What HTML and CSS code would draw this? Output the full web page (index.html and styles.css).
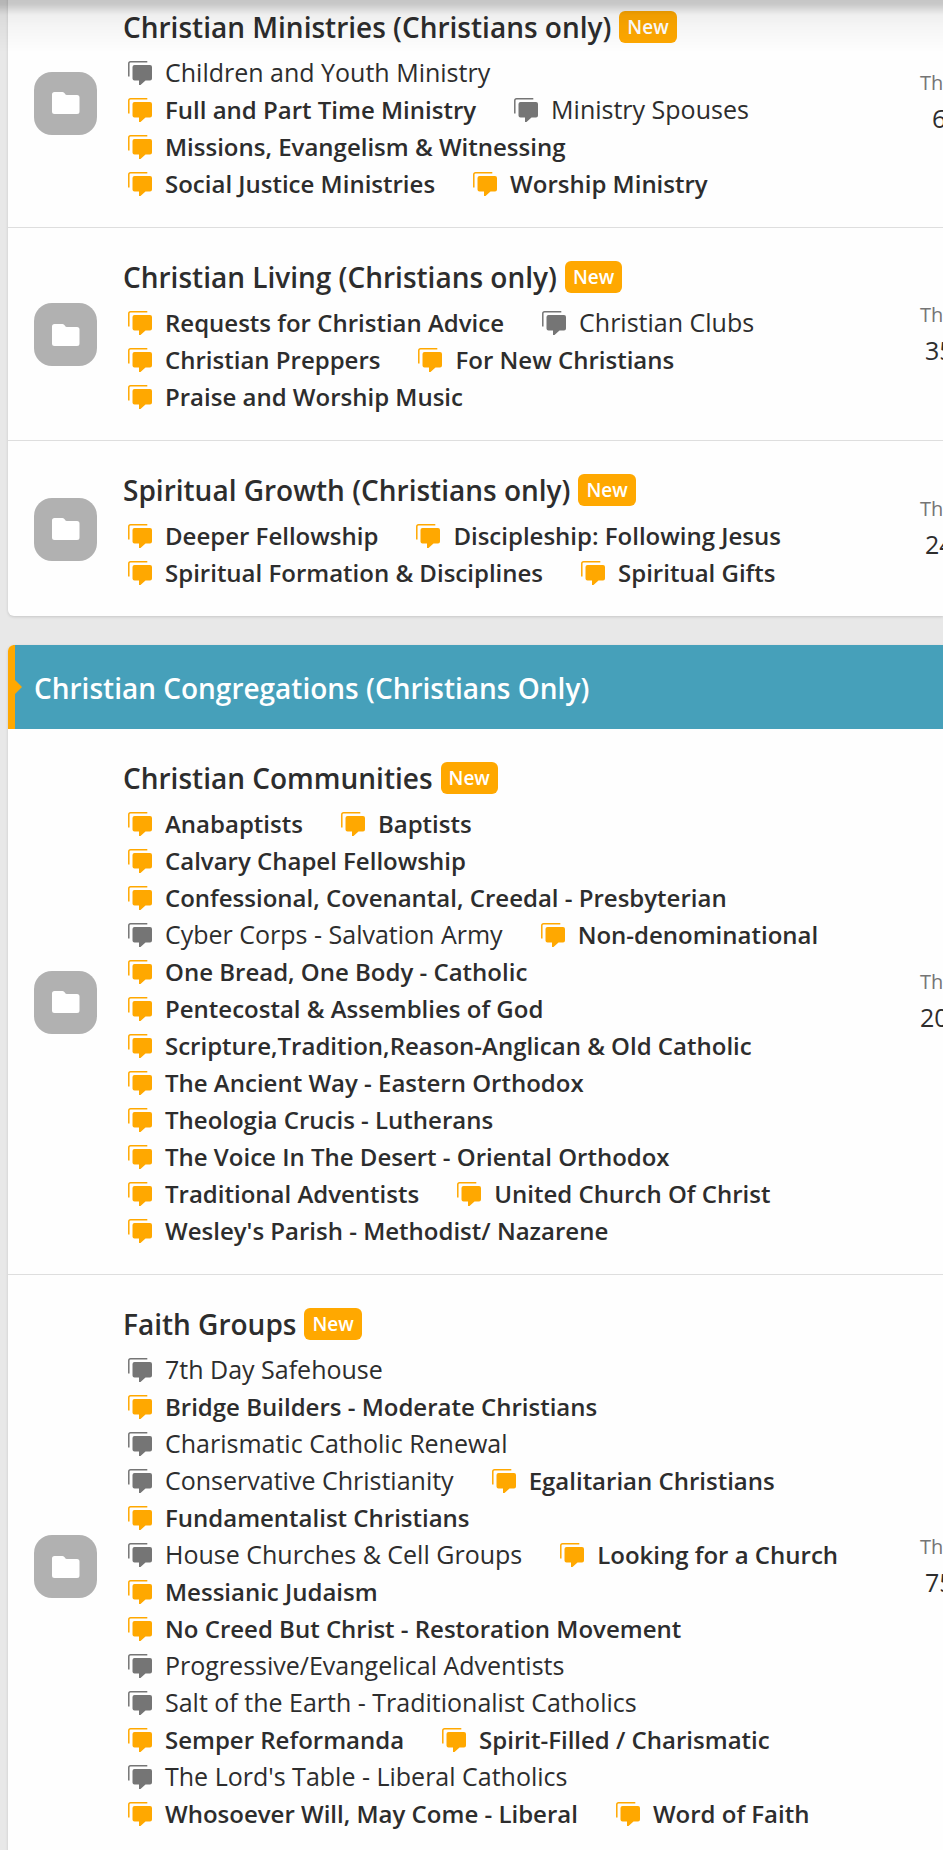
FILE: index.html
```html
<!DOCTYPE html>
<html lang="en">
<head>
<meta charset="utf-8">
<meta name="viewport" content="width=device-width, initial-scale=1">
<title>Forums</title>
<link rel="stylesheet" href="styles.css">
</head>
<body>
<svg class="defs" aria-hidden="true">
  <symbol id="chat" viewBox="0 0 24 24">
    <path d="M.8 15.5V2.6Q.8.8 2.6.8H19.300" fill="none" stroke="currentColor" stroke-width="1.500"/>
    <path d="M6.500 4H22Q24 4 24 6V17.500Q24 19.500 22 19.500H17.500L12.500 24H11V19.500H6.500Q4.500 19.500 4.500 17.500V6Q4.500 4 6.500 4Z" fill="currentColor"/>
  </symbol>
  <symbol id="folder" viewBox="0 0 28 22">
    <path d="M2.500 0H10.500Q12 0 12.800 1.500Q13.600 3 15 3H25Q27.500 3 27.500 5.500V19.500Q27.500 22 25 22H2.500Q0 22 0 19.500V2.500Q0 0 2.500 0Z" fill="currentColor"/>
  </symbol>
</svg>
<div class="top-shade"></div>
<main class="page">
  <section class="card card-first">
    <article class="node">
      <span class="node-icon"><svg><use href="#folder"/></svg></span>
      <div class="node-main">
        <h3 class="node-title"><a href="#">Christian Ministries (Christians only)</a><span class="badge">New</span></h3>
        <ul class="subs">
          <li><a href="#"><svg><use href="#chat"/></svg>Children and Youth Ministry</a></li>
          <li class="unread"><a href="#"><svg><use href="#chat"/></svg>Full and Part Time Ministry</a></li>
          <li><a href="#"><svg><use href="#chat"/></svg>Ministry Spouses</a></li>
          <li class="unread"><a href="#"><svg><use href="#chat"/></svg>Missions, Evangelism &amp; Witnessing</a></li>
          <li class="unread"><a href="#"><svg><use href="#chat"/></svg>Social Justice Ministries</a></li>
          <li class="unread"><a href="#"><svg><use href="#chat"/></svg>Worship Ministry</a></li>
        </ul>
      </div>
      <dl class="stats short"><dt>Th</dt><dd>6</dd></dl>
    </article>
    <article class="node">
      <span class="node-icon"><svg><use href="#folder"/></svg></span>
      <div class="node-main">
        <h3 class="node-title"><a href="#">Christian Living (Christians only)</a><span class="badge">New</span></h3>
        <ul class="subs">
          <li class="unread"><a href="#"><svg><use href="#chat"/></svg>Requests for Christian Advice</a></li>
          <li><a href="#"><svg><use href="#chat"/></svg>Christian Clubs</a></li>
          <li class="unread"><a href="#"><svg><use href="#chat"/></svg>Christian Preppers</a></li>
          <li class="unread"><a href="#"><svg><use href="#chat"/></svg>For New Christians</a></li>
          <li class="unread"><a href="#"><svg><use href="#chat"/></svg>Praise and Worship Music</a></li>
        </ul>
      </div>
      <dl class="stats"><dt>Th</dt><dd>35</dd></dl>
    </article>
    <article class="node">
      <span class="node-icon"><svg><use href="#folder"/></svg></span>
      <div class="node-main">
        <h3 class="node-title"><a href="#">Spiritual Growth (Christians only)</a><span class="badge">New</span></h3>
        <ul class="subs">
          <li class="unread"><a href="#"><svg><use href="#chat"/></svg>Deeper Fellowship</a></li>
          <li class="unread"><a href="#"><svg><use href="#chat"/></svg>Discipleship: Following Jesus</a></li>
          <li class="unread"><a href="#"><svg><use href="#chat"/></svg>Spiritual Formation &amp; Disciplines</a></li>
          <li class="unread"><a href="#"><svg><use href="#chat"/></svg>Spiritual Gifts</a></li>
        </ul>
      </div>
      <dl class="stats"><dt>Th</dt><dd>24</dd></dl>
    </article>
  </section>

  <section class="card">
    <h2 class="card-header"><a href="#">Christian Congregations (Christians Only)</a></h2>
    <article class="node">
      <span class="node-icon"><svg><use href="#folder"/></svg></span>
      <div class="node-main">
        <h3 class="node-title"><a href="#">Christian Communities</a><span class="badge">New</span></h3>
        <ul class="subs">
          <li class="unread"><a href="#"><svg><use href="#chat"/></svg>Anabaptists</a></li>
          <li class="unread"><a href="#"><svg><use href="#chat"/></svg>Baptists</a></li>
          <li class="unread"><a href="#"><svg><use href="#chat"/></svg>Calvary Chapel Fellowship</a></li>
          <li class="unread"><a href="#"><svg><use href="#chat"/></svg>Confessional, Covenantal, Creedal - Presbyterian</a></li>
          <li><a href="#"><svg><use href="#chat"/></svg>Cyber Corps - Salvation Army</a></li>
          <li class="unread"><a href="#"><svg><use href="#chat"/></svg>Non-denominational</a></li>
          <li class="unread"><a href="#"><svg><use href="#chat"/></svg>One Bread, One Body - Catholic</a></li>
          <li class="unread"><a href="#"><svg><use href="#chat"/></svg>Pentecostal &amp; Assemblies of God</a></li>
          <li class="unread"><a href="#"><svg><use href="#chat"/></svg>Scripture,Tradition,Reason-Anglican &amp; Old Catholic</a></li>
          <li class="unread"><a href="#"><svg><use href="#chat"/></svg>The Ancient Way - Eastern Orthodox</a></li>
          <li class="unread"><a href="#"><svg><use href="#chat"/></svg>Theologia Crucis - Lutherans</a></li>
          <li class="unread"><a href="#"><svg><use href="#chat"/></svg>The Voice In The Desert - Oriental Orthodox</a></li>
          <li class="unread"><a href="#"><svg><use href="#chat"/></svg>Traditional Adventists</a></li>
          <li class="unread"><a href="#"><svg><use href="#chat"/></svg>United Church Of Christ</a></li>
          <li class="unread"><a href="#"><svg><use href="#chat"/></svg>Wesley's Parish - Methodist/ Nazarene</a></li>
        </ul>
      </div>
      <dl class="stats long"><dt>Th</dt><dd>20</dd></dl>
    </article>
    <article class="node">
      <span class="node-icon"><svg><use href="#folder"/></svg></span>
      <div class="node-main">
        <h3 class="node-title"><a href="#">Faith Groups</a><span class="badge">New</span></h3>
        <ul class="subs">
          <li><a href="#"><svg><use href="#chat"/></svg>7th Day Safehouse</a></li>
          <li class="unread"><a href="#"><svg><use href="#chat"/></svg>Bridge Builders - Moderate Christians</a></li>
          <li><a href="#"><svg><use href="#chat"/></svg>Charismatic Catholic Renewal</a></li>
          <li><a href="#"><svg><use href="#chat"/></svg>Conservative Christianity</a></li>
          <li class="unread"><a href="#"><svg><use href="#chat"/></svg>Egalitarian Christians</a></li>
          <li class="unread"><a href="#"><svg><use href="#chat"/></svg>Fundamentalist Christians</a></li>
          <li><a href="#"><svg><use href="#chat"/></svg>House Churches &amp; Cell Groups</a></li>
          <li class="unread"><a href="#"><svg><use href="#chat"/></svg>Looking for a Church</a></li>
          <li class="unread"><a href="#"><svg><use href="#chat"/></svg>Messianic Judaism</a></li>
          <li class="unread"><a href="#"><svg><use href="#chat"/></svg>No Creed But Christ - Restoration Movement</a></li>
          <li><a href="#"><svg><use href="#chat"/></svg>Progressive/Evangelical Adventists</a></li>
          <li><a href="#"><svg><use href="#chat"/></svg>Salt of the Earth - Traditionalist Catholics</a></li>
          <li class="unread"><a href="#"><svg><use href="#chat"/></svg>Semper Reformanda</a></li>
          <li class="unread"><a href="#"><svg><use href="#chat"/></svg>Spirit-Filled / Charismatic</a></li>
          <li><a href="#"><svg><use href="#chat"/></svg>The Lord's Table - Liberal Catholics</a></li>
          <li class="unread"><a href="#"><svg><use href="#chat"/></svg>Whosoever Will, May Come - Liberal</a></li>
          <li class="unread"><a href="#"><svg><use href="#chat"/></svg>Word of Faith</a></li>
        </ul>
      </div>
      <dl class="stats"><dt>Th</dt><dd>75</dd></dl>
    </article>
  </section>
</main>
</body>
</html>
```
FILE: styles.css
```css
* { box-sizing: border-box; }
html { overflow: hidden; }
body {
  margin: 0;
  background: #e8e8e8;
  color: #2d2d2d;
  font-family: "Open Sans", "Noto Sans", sans-serif;
  font-size: 25px;
}
a { color: inherit; text-decoration: none; }
h2, h3, ul, dl, dd { margin: 0; padding: 0; }
.defs { position: absolute; width: 0; height: 0; }
.page { display: flex; flex-direction: column; gap: 29px; padding-left: 8px; }

/* shadow cast by the bar above the list */
.top-shade {
  position: fixed;
  inset: 0 0 auto;
  height: 52px;
  background: linear-gradient(rgba(0,0,0,.22) 0, rgba(0,0,0,.21) 4px, rgba(0,0,0,.06) 15px, rgba(0,0,0,.03) 28px, transparent);
  pointer-events: none;
}

.card {
  background: #fefefe;
  border-radius: 6px 0 0 6px;
  box-shadow: 0 1px 3px rgba(0,0,0,.15);
}
.card-first { margin-top: -22px; }

.card-header {
  position: relative;
  display: flex;
  align-items: center;
  height: 84px;
  padding: 2px 0 0 19px;
  background: #46a0ba;
  border-left: 7px solid #ffa800;
  border-radius: 6px 0 0 0;
  color: #fff;
  font-size: 28px;
  font-weight: 600;
}
.card-header::before {
  content: "";
  position: absolute;
  left: 0;
  top: 35px;
  border: 7px solid transparent;
  border-left-color: #ffa800;
  border-right: 0;
}

.node { display: flex; align-items: center; padding: 26px 0 25px 26px; overflow: hidden; }
.node + .node { border-top: 1px solid #dedede; }
.node-icon {
  display: grid;
  place-items: center;
  flex: none;
  width: 63px;
  height: 63px;
  margin-right: 26px;
  border-radius: 18px;
  background: #b1b1b1;
  color: #fff;
}
.node-icon svg { width: 28px; height: 22px; }
.node-main { flex: 1; min-width: 0; padding-right: 12px; }
.node-title {
  display: flex;
  align-items: center;
  gap: 8px;
  height: 45px;
  font-size: 28px;
  font-weight: 600;
}
.badge {
  padding: 0 8px;
  border-radius: 6px;
  background: #ffa800;
  color: #fff;
  font-size: 19px;
  font-weight: 600;
  line-height: 32px;
}
.subs { display: flex; flex-wrap: wrap; column-gap: 38px; padding: 5px 0 0 5px; list-style: none; }
.subs li { height: 37px; }
.subs a { display: flex; align-items: center; gap: 13px; line-height: 37px; white-space: nowrap; }
.subs svg { width: 24px; height: 24px; color: #757575; }
.subs .unread { font-size: 24px; font-weight: 600; }
.subs .unread svg { color: #ffa800; }

.stats { flex: none; width: 90px; padding-left: 67px; white-space: nowrap; }
.stats dt { color: #757575; font-size: 20px; line-height: 30px; }
.stats dd { padding-left: 5px; line-height: 40px; }
.short dd { padding-left: 12px; }
.long dd { padding-left: 0; }
```
